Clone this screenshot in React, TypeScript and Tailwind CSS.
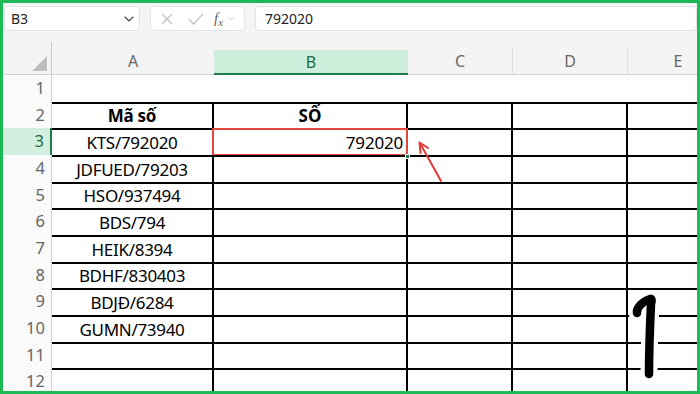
import { ChevronDown } from "lucide-react";

const font = { fontFamily: '"Noto Sans", "Liberation Sans", sans-serif' };

const cols = [
  { k: "A", w: "w-[162px]", border: true },
  { k: "B", w: "w-[194px]", border: true },
  { k: "C", w: "w-[105px]", border: true },
  { k: "D", w: "w-[115px]", border: true },
  { k: "E", w: "w-[100px]", border: false },
];

const aVals: Record<number, string> = {
  2: "Mã số",
  3: "KTS/792020",
  4: "JDFUED/79203",
  5: "HSO/937494",
  6: "BDS/794",
  7: "HEIK/8394",
  8: "BDHF/830403",
  9: "BDJĐ/6284",
  10: "GUMN/73940",
};

const rows = [1, 2, 3, 4, 5, 6, 7, 8, 9, 10, 11, 12];

function Cell({ row, ci }: { row: number; ci: number }) {
  const c = cols[ci];
  const grid = row >= 2;
  const cls = [
    c.w,
    "shrink-0 h-full relative flex items-center",
    grid ? "border-t-2 border-black" : "",
    grid && c.border ? "border-r-2 border-r-black" : "",
    !grid && c.border ? "border-r-2 border-r-transparent" : "",
  ].join(" ");
  let content: React.ReactNode = null;
  if (ci === 0 && aVals[row]) {
    content = (
      <span
        className={
          "w-full text-center text-[17px] tracking-[-0.3px] text-black leading-none " +
          (row === 2 ? "font-bold" : "")
        }
      >
        {aVals[row]}
      </span>
    );
  }
  if (ci === 1 && row === 2) {
    content = (
      <span className="w-full text-center text-[17px] font-bold text-black leading-none">SỐ</span>
    );
  }
  if (ci === 1 && row === 3) {
    content = (
      <>
        <span className="w-full text-right pr-[3px] text-[17px] tracking-[-0.2px] text-black leading-none">
          792020
        </span>
        <div className="absolute left-[-2px] top-[-2px] right-[-2px] bottom-[-1px] border-2 border-[#e0473d]" />
        <div className="absolute right-[-4px] bottom-[-4px] w-[5px] h-[5px] bg-[#1e7b45] border border-white z-10" />
      </>
    );
  }
  return <div className={cls}>{content}</div>;
}

export default function App() {
  return (
    <div
      className="w-[700px] h-[394px] overflow-hidden relative border-[3px] border-[#1db954] bg-[#f4f4f4]"
      style={font}
    >
      {/* toolbar */}
      <div className="h-[33px] flex items-start pt-[3px] pl-[1px]">
        <div className="w-[136px] h-[25px] bg-white border border-[#e3e3e3] rounded-[4px] flex items-center justify-between pl-[6px] pr-[2px]">
          <span className="text-[14px] text-[#222]">B3</span>
          <ChevronDown size={16} strokeWidth={1.6} color="#444" />
        </div>
        <div className="ml-[10px] w-[95px] h-[25px] bg-white border border-[#e3e3e3] rounded-[4px] flex items-center pl-[9px] gap-[14px]">
          <svg width="14" height="14" viewBox="0 0 14 14">
            <path d="M2 2 L12 12 M12 2 L2 12" stroke="#c4c4c4" strokeWidth="1.3" fill="none" />
          </svg>
          <svg width="16" height="14" viewBox="0 0 16 14">
            <path d="M1 7 L5.5 12 L15 2" stroke="#c4c4c4" strokeWidth="1.3" fill="none" />
          </svg>
          <span className="flex items-center -ml-[4px]">
            <span className="italic text-[15px] text-[#666]" style={{ fontFamily: '"Liberation Serif", serif' }}>
              f<span className="text-[11px] relative top-[3px]">x</span>
            </span>
            <ChevronDown size={9} strokeWidth={1.5} color="#aaa" className="ml-[4px]" />
          </span>
        </div>
        <div className="ml-[10px] flex-1 h-[25px] bg-white border border-[#e3e3e3] rounded-[4px] flex items-center pl-[9px]">
          <span className="text-[14px] text-[#222]">792020</span>
        </div>
      </div>

      {/* column headers */}
      <div className="h-[39px] flex">
        <div className="w-[49px] shrink-0 h-full pt-[6px]">
          <div className="h-full border-r border-[#c8c8c8] border-b border-b-[#d4d4d4] relative">
            <svg className="absolute right-[4px] bottom-[3px]" width="15" height="15" viewBox="0 0 15 15">
              <polygon points="15,0 15,15 0,15" fill="#bdbdbd" />
            </svg>
          </div>
        </div>
        {cols.map((c) => (
          <div key={c.k} className={c.w + " shrink-0 h-full flex flex-col justify-end"}>
            {c.k === "B" ? (
              <div className="h-[25px] bg-[#cdeedb] border-b-2 border-[#1e7b45] flex items-center justify-center text-[16px] text-[#1e6b3e]">
                B
              </div>
            ) : (
              <div
                className={
                  "h-[27px] border-b border-[#d4d4d4] flex items-center justify-center text-[16px] text-[#666] " +
                  (c.k === "C" || c.k === "D" ? "border-r border-r-[#dcdcdc]" : "")
                }
              >
                {c.k}
              </div>
            )}
          </div>
        ))}
      </div>

      {/* rows */}
      <div className="flex flex-col bg-white">
        {rows.map((r) => (
          <div key={r} className="h-[26.67px] shrink-0 flex">
            <div
              className={
                "w-[49px] shrink-0 h-full flex items-center justify-end pr-[6px] text-[16.5px] " +
                (r === 3
                  ? "bg-[#d3efdf] text-[#1e6b3e] border-r-2 border-[#1e7b45]"
                  : "bg-[#fafafa] text-[#666] border-r border-[#d4d4d4]")
              }
            >
              {r}
            </div>
            {cols.map((c, ci) => (
              <Cell key={c.k} row={r} ci={ci} />
            ))}
          </div>
        ))}
      </div>

      {/* overlays: arrow and handwritten 1 */}
      <svg className="absolute -left-[3px] -top-[3px] pointer-events-none" width="700" height="394" viewBox="0 0 700 394">
        <path d="M441 181 L421 145" stroke="#e53935" strokeWidth="2" strokeLinecap="round" fill="none" />
        <path d="M419.5 142.5 L420.5 153 M419.5 142.5 L428 148" stroke="#e53935" strokeWidth="2" strokeLinecap="round" fill="none" />
        <path
          d="M637 313 C636 308, 643 301, 650 299 C652 298, 652 301, 651 304 C650 325, 649 350, 649 374"
          stroke="#ffffff"
          strokeWidth="17"
          strokeLinecap="round"
          strokeLinejoin="round"
          fill="none"
        />
        <path
          d="M637 313 C636 308, 643 301, 650 299 C652 298, 652 301, 651 304 C650 325, 649 350, 649 374"
          stroke="#000000"
          strokeWidth="8.5"
          strokeLinecap="round"
          strokeLinejoin="round"
          fill="none"
        />
      </svg>
    </div>
  );
}
